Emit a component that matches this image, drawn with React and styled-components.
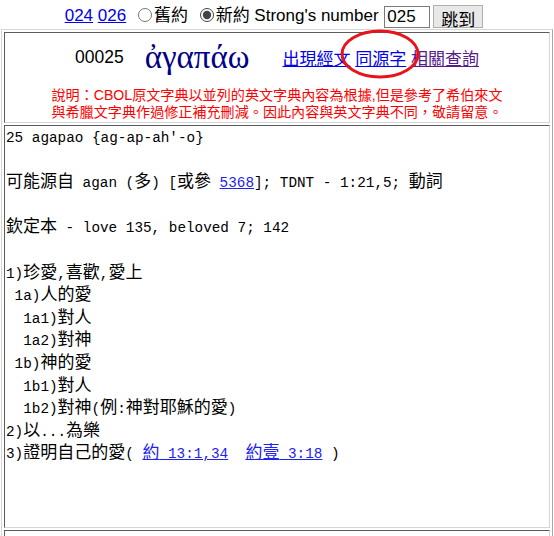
import React from "react";
import styled, { createGlobalStyle } from "styled-components";

const HAN = /([\u2E80-\u9FFF\uF900-\uFAFF\uFF00-\uFFEF\u3000-\u303F]+)/;

// Latin in the mono font, CJK runs a size up so they take two columns
const Mixed = ({ t }) =>
  t.split(HAN).map((part, i) => (i % 2 === 1 ? <Han key={i}>{part}</Han> : part));

const App = () => {
  return (
    <>
      <GlobalStyle />
      <TopBar>
        <Link href="#">024</Link> <Link href="#">026</Link> <Radio name="t" />
        舊約 <Radio name="t" defaultChecked />
        新約 Strong's number <NumberInput defaultValue="025" />
        <JumpButton>跳到</JumpButton>
      </TopBar>
      <Table>
        <HeaderCell>
          <HeaderRow>
            <Serial>00025</Serial>
            <Greek>ἀγαπάω</Greek>
            <Links>
              <Link href="#">出現經文</Link>{" "}
              <Circled>
                <Link href="#">同源字</Link>
                <Ring viewBox="0 0 80 50">
                  <ellipse cx="40" cy="25" rx="38" ry="23" />
                </Ring>
              </Circled>{" "}
              <Link href="#" $visited>
                相關查詢
              </Link>
            </Links>
          </HeaderRow>
          <Notice>
            說明：CBOL原文字典以並列的英文字典內容為根據,但是參考了希伯來文
            <br />
            與希臘文字典作過修正補充刪減。因此內容與英文字典不同，敬請留意。
          </Notice>
        </HeaderCell>
        <BodyCell>
          <Pre>
            <Mixed t={"25 agapao {ag-ap-ah'-o}\n\n"} />
            <Mixed t={"可能源自 agan (多) [或參 "} />
            <PreLink href="#">5368</PreLink>
            <Mixed t={"]; TDNT - 1:21,5; 動詞\n\n"} />
            <Mixed t={"欽定本 - love 135, beloved 7; 142\n\n"} />
            <Mixed
              t={
                "1)珍愛,喜歡,愛上\n 1a)人的愛\n  1a1)對人\n  1a2)對神\n 1b)神的愛\n  1b1)對人\n  1b2)對神(例:神對耶穌的愛)\n2)以...為樂\n3)證明自己的愛( "
              }
            />
            <PreLink href="#">
              <Mixed t="約 13:1,34" />
            </PreLink>
            {"  "}
            <PreLink href="#">
              <Mixed t="約壹 3:18" />
            </PreLink>
            {" )"}
          </Pre>
        </BodyCell>
        <FootCell />
      </Table>
    </>
  );
};

export default App;

const GlobalStyle = createGlobalStyle`
  body {
    margin: 0;
    background: #fff;
    color: #000;
    font-family: "Liberation Sans", "Noto Sans CJK TC", sans-serif;
    font-size: 17px;
    overflow: hidden;
  }
`;

const TopBar = styled.div`
  height: 29px;
  box-sizing: border-box;
  padding-top: 4px;
  padding-right: 6px;
  line-height: 24px;
  text-align: center;
  white-space: nowrap;
`;

const Link = styled.a`
  color: ${(p) => (p.$visited ? "#551a8b" : "#0000ee")};
  text-decoration: underline;
`;

const Radio = styled.input.attrs({ type: "radio" })`
  width: 14px;
  height: 14px;
  margin: 0 2px 0 7px;
  vertical-align: -1px;
  accent-color: #444;
`;

const NumberInput = styled.input`
  width: 46px;
  height: 22px;
  box-sizing: border-box;
  margin-left: 1px;
  padding: 0 2px;
  border: 1px solid #7a7a7a;
  font-family: inherit;
  font-size: 17px;
  vertical-align: middle;
`;

const JumpButton = styled.button`
  width: 50px;
  height: 23px;
  box-sizing: border-box;
  margin-left: 3px;
  padding: 0;
  background: #e8e8e8;
  border: 1px solid #b0b0b0;
  font-family: inherit;
  font-size: 17px;
  color: #000;
  vertical-align: middle;
`;

const Table = styled.div`
  margin-left: 1px;
  width: 552px;
  box-sizing: border-box;
  padding: 2px;
  border: 1px solid;
  border-color: #d6d6d6 #a6a6a6 #a6a6a6 #d6d6d6;
  display: flex;
  flex-direction: column;
  gap: 2px;
`;

const Cell = styled.div`
  box-sizing: border-box;
  border: 1px solid;
  border-color: #5c5c5c #d6d6d6 #d6d6d6 #5c5c5c;
  padding: 1px;
`;

const HeaderCell = styled(Cell)`
  height: 91px;
  display: flex;
  flex-direction: column;
  align-items: center;
  padding-top: 4px;
`;

const HeaderRow = styled.div`
  height: 40px;
  display: flex;
  align-items: center;
`;

const Serial = styled.span`
  margin-right: 21px;
  font-size: 17.5px;
`;

const Greek = styled.span`
  margin-right: 33px;
  font-family: "Liberation Serif", "DejaVu Serif", serif;
  font-size: 33px;
  color: #000088;
`;

const Links = styled.span`
  white-space: nowrap;
`;

const Circled = styled.span`
  position: relative;
`;

const Ring = styled.svg`
  position: absolute;
  left: -15px;
  top: -21px;
  width: 80px;
  height: 50px;
  overflow: visible;
  pointer-events: none;

  ellipse {
    fill: none;
    stroke: #e8141c;
    stroke-width: 3;
  }
`;

const Notice = styled.div`
  margin-top: 10px;
  font-size: 14.1px;
  line-height: 17px;
  color: #ff0000;
  text-align: center;
  white-space: nowrap;
`;

const BodyCell = styled(Cell)`
  height: 403px;
`;

const Pre = styled.pre`
  margin: 0;
  font-family: "Liberation Mono", monospace;
  font-size: 14.33px;
  line-height: 22.6px;
  color: #000;
`;

const Han = styled.span`
  font-family: "Noto Sans CJK TC", sans-serif;
  font-size: 17px;
  line-height: 12px;
`;

const PreLink = styled.a`
  color: #2222ee;
  text-decoration: underline;
`;

const FootCell = styled(Cell)`
  height: 20px;
`;
